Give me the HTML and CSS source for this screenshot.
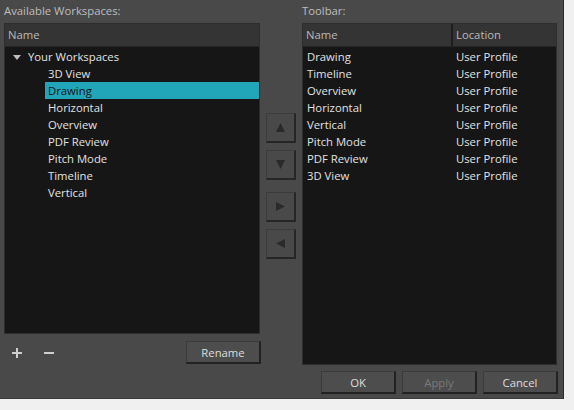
FILE: index.html
```html
<!DOCTYPE html>
<html>
<head>
<meta charset="utf-8">
<link rel="stylesheet" href="styles.css">
</head>
<body>
<div class="dialog">
  <div class="col left">
    <div class="label">Available Workspaces:</div>
    <div class="listbox tree">
      <div class="header"><div class="hcell">Name</div></div>
      <div class="rows">
        <div class="row parent"><span class="caret"></span>Your Workspaces</div>
        <div class="row child">3D View</div>
        <div class="row child selected">Drawing</div>
        <div class="row child">Horizontal</div>
        <div class="row child">Overview</div>
        <div class="row child">PDF Review</div>
        <div class="row child">Pitch Mode</div>
        <div class="row child">Timeline</div>
        <div class="row child">Vertical</div>
      </div>
    </div>
    <div class="left-footer">
      <span class="icon-btn">
        <svg width="14" height="14" viewBox="0 0 14 14"><path d="M7 2v10M2 7h10" stroke="#cfcfcf" stroke-width="2"/></svg>
      </span>
      <span class="icon-btn">
        <svg width="14" height="14" viewBox="0 0 14 14"><path d="M2 7h10" stroke="#cfcfcf" stroke-width="2"/></svg>
      </span>
      <span class="spacer"></span>
      <button class="btn rename">Rename</button>
    </div>
  </div>
  <div class="mid">
    <div class="arrow-btn"><svg width="11" height="11" viewBox="0 0 11 11"><path d="M5.5 1L10 10H1Z" fill="#2a2a2a"/></svg></div>
    <div class="arrow-btn"><svg width="11" height="11" viewBox="0 0 11 11"><path d="M1 1H10L5.5 10Z" fill="#2a2a2a"/></svg></div>
    <div class="arrow-btn gap"><svg width="11" height="11" viewBox="0 0 11 11"><path d="M1 1L10 5.5L1 10Z" fill="#2a2a2a"/></svg></div>
    <div class="arrow-btn"><svg width="11" height="11" viewBox="0 0 11 11"><path d="M10 1L1 5.5L10 10Z" fill="#2a2a2a"/></svg></div>
  </div>
  <div class="col right">
    <div class="label">Toolbar:</div>
    <div class="listbox table">
      <div class="header">
        <div class="hcell c1">Name</div>
        <div class="hcell c2">Location</div>
      </div>
      <div class="rows">
        <div class="trow"><span class="c1">Drawing</span><span class="c2">User Profile</span></div>
        <div class="trow"><span class="c1">Timeline</span><span class="c2">User Profile</span></div>
        <div class="trow"><span class="c1">Overview</span><span class="c2">User Profile</span></div>
        <div class="trow"><span class="c1">Horizontal</span><span class="c2">User Profile</span></div>
        <div class="trow"><span class="c1">Vertical</span><span class="c2">User Profile</span></div>
        <div class="trow"><span class="c1">Pitch Mode</span><span class="c2">User Profile</span></div>
        <div class="trow"><span class="c1">PDF Review</span><span class="c2">User Profile</span></div>
        <div class="trow"><span class="c1">3D View</span><span class="c2">User Profile</span></div>
      </div>
    </div>
    <div class="right-footer">
      <button class="btn">OK</button>
      <button class="btn disabled">Apply</button>
      <button class="btn">Cancel</button>
    </div>
  </div>
</div>
</body>
</html>
```
FILE: styles.css
```css
* { box-sizing: border-box; }
html, body { margin: 0; padding: 0; }
body {
  background: #f0f0f0;
  font-family: "Open Sans", "Noto Sans", sans-serif;
  font-size: 11.3px;
  color: #e2e2e2;
  width: 574px;
  height: 410px;
}
.dialog {
  width: 564px;
  height: 399px;
  background: #494949;
  border-right: 1px solid #2b2b2b;
  border-bottom: 1px solid #3a3a3a;
  display: flex;
  padding-left: 4px;
}
.col { display: flex; flex-direction: column; }
.left { width: 256px; }
.right { width: 255px; margin-left: 6px; }
.label {
  height: 23px;
  line-height: 22px;
  color: #bdbdbd;
}
.listbox {
  background: #161616;
  border: 1px solid #2e2e2e;
  display: flex;
  flex-direction: column;
}
.tree { height: 311px; }
.table { height: 342px; }
.header {
  height: 23px;
  background: #343434;
  border-bottom: 1px solid #242424;
  display: flex;
  color: #b9b9b9;
}
.hcell { line-height: 21px; padding-left: 3px; }
.rows { padding-top: 1px; }
.row {
  height: 17px;
  line-height: 17px;
  white-space: nowrap;
}
.parent { padding-left: 8px; display: flex; align-items: center; }
.caret {
  width: 0; height: 0;
  border-left: 4px solid transparent;
  border-right: 4px solid transparent;
  border-top: 5px solid #bdbdbd;
  margin-right: 7px;
  margin-top: 1px;
}
.child { margin-left: 40px; padding-left: 3px; }
.selected { background: #21a5b9; color: #111; }
.left-footer {
  display: flex;
  align-items: center;
  margin-top: 7px;
  height: 23px;
}
.icon-btn { width: 14px; height: 14px; display: flex; margin-left: 6px; margin-right: 12px; }
.icon-btn + .icon-btn { margin-left: 6px; }
.spacer { flex: 1; }
.btn {
  width: 75px;
  height: 23px;
  background: #4d4d4d;
  border: 1px solid #3a3a3a;
  border-right: 2px solid #222;
  border-bottom: 2px solid #222;
  color: #dedede;
  font-family: "Open Sans", "Noto Sans", sans-serif;
  font-size: 11.3px;
  padding: 0;
  line-height: 19px;
}
.rename { margin-right: -1px; }
.btn.disabled { color: #7a7a7a; }
.right-footer {
  display: flex;
  justify-content: flex-end;
  gap: 6px;
  margin-top: 6px;
  margin-right: -1px;
}
.mid {
  width: 30px;
  margin-left: 6px;
  padding-top: 113px;
  display: flex;
  flex-direction: column;
  gap: 7px;
}
.arrow-btn {
  width: 30px;
  height: 30px;
  background: #494949;
  border: 1px solid #3c3c3c;
  border-right: 2px solid #262626;
  border-bottom: 2px solid #262626;
  display: flex;
  align-items: center;
  justify-content: center;
}
.arrow-btn.gap { margin-top: 5px; }
.c1 { width: 150px; }
.c2 { flex: 1; }
.header .c1 { border-right: 2px solid #1e1e1e; }
.trow {
  display: flex;
  height: 17px;
  line-height: 17px;
  white-space: nowrap;
}
.trow .c1 { padding-left: 4px; }
.trow .c2 { padding-left: 3px; }
```
